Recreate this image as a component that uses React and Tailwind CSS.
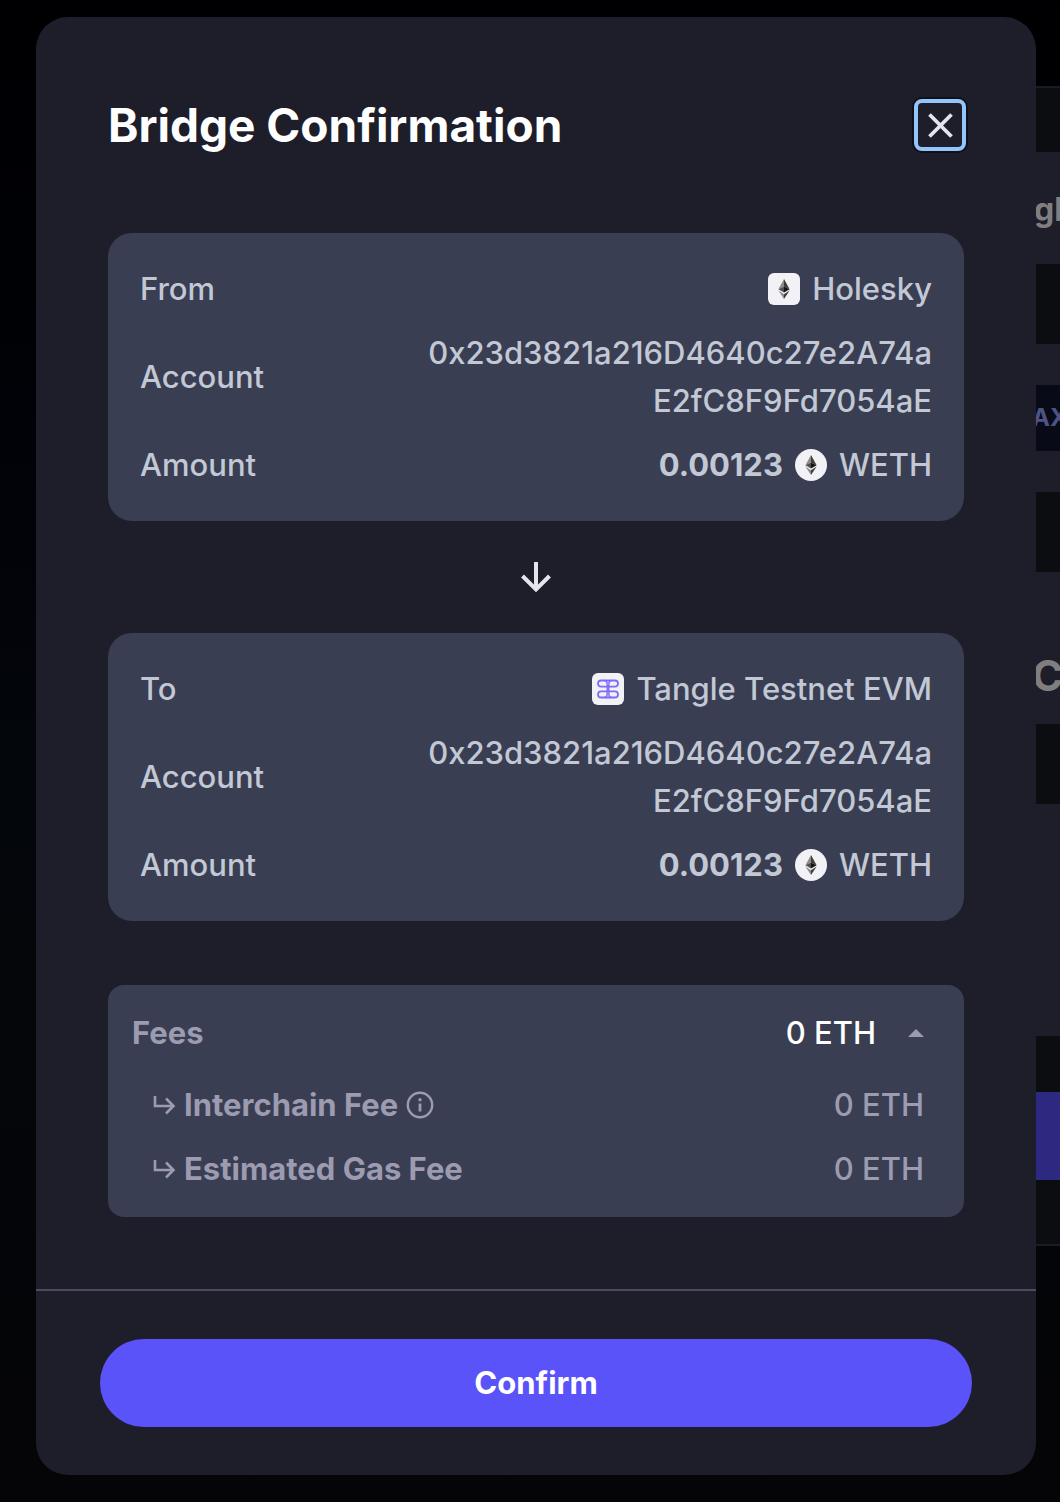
function EthMark() {
  return (
    <svg viewBox="0 0 32 32" className="size-8" aria-hidden="true">
      <path d="M16 6 10.4 16.2 16 13.6z" fill="#8a8a8a" />
      <path d="M16 6v7.6l5.6 2.6z" fill="#3c3c3b" />
      <path d="M10.4 16.2 16 19.6v-6z" fill="#505050" />
      <path d="M21.6 16.2 16 19.6v-6z" fill="#141414" />
      <path d="M10.4 17.6 16 26v-4.8z" fill="#8c8c8c" />
      <path d="M21.6 17.6 16 26v-4.8z" fill="#3c3c3b" />
    </svg>
  );
}

function TangleMark() {
  return (
    <svg viewBox="0 0 32 32" className="size-8" fill="none" stroke="#7c6cf8" strokeWidth="1.8" aria-hidden="true">
      <rect x="6" y="7.500" width="20" height="6.200" rx="3.100" />
      <rect x="6" y="18.300" width="20" height="6.200" rx="3.100" />
      <path d="M12 7.500c3.200 0 3.200 2.500 3.200 5.500v6c0 3 0 5.500-3.200 5.500M20 7.500c-3.200 0-3.200 2.500-3.200 5.500v6c0 3 0 5.500 3.200 5.500" strokeWidth="1.400" />
    </svg>
  );
}

function TransferCard({ label, chain, chainMark }) {
  return (
    <dl className="flex flex-col gap-4 rounded-3xl bg-[#3a3e53] p-8 text-[31px] leading-[48px] font-medium text-[#c2c8d4]">
      <div className="flex items-center justify-between">
        <dt>{label}</dt>
        <dd className="flex items-center gap-3">
          <span className="rounded-md bg-[#f1f1f6]">{chainMark}</span>
          {chain}
        </dd>
      </div>
      <div className="flex items-center justify-between">
        <dt>Account</dt>
        <dd className="max-w-[512px] text-right break-all">0x23d3821a216D4640c27e2A74aE2fC8F9Fd7054aE</dd>
      </div>
      <div className="flex items-center justify-between">
        <dt>Amount</dt>
        <dd className="flex items-center gap-3">
          <span className="font-bold">0.00123</span>
          <span className="rounded-full bg-[#f1f1f6]"><EthMark /></span>
          WETH
        </dd>
      </div>
    </dl>
  );
}

function FeeRow({ name, info }) {
  return (
    <div className="flex items-center justify-between pr-4 pl-5">
      <div className="flex items-center">
        <svg viewBox="0 0 24 24" className="mr-2 size-6" fill="none" stroke="currentColor" strokeWidth="2.6" aria-hidden="true">
          <path d="M3 3v10h19M14 5.500l7.500 7.500L14 20.500" />
        </svg>
        <span className="font-bold">{name}</span>
        {info && (
          <button type="button" aria-label="About this fee" className="ml-2">
            <svg viewBox="0 0 28 28" className="size-7" fill="none" stroke="currentColor" strokeWidth="2.400" aria-hidden="true">
              <circle cx="14" cy="14" r="12.200" />
              <path d="M14 12.500v8" strokeWidth="2.800" />
              <circle cx="14" cy="8.700" r="1.700" fill="currentColor" stroke="none" />
            </svg>
          </button>
        )}
      </div>
      <span>0 ETH</span>
    </div>
  );
}

function Backdrop() {
  return (
    <div aria-hidden="true" className="col-start-1 row-start-1 flex justify-end overflow-hidden bg-[#020206] bg-linear-to-b from-[#000003] via-[#03060b] to-[#050507] pt-[86px]">
      <div className="flex h-[1160px] w-10 flex-col overflow-hidden border-y-2 border-[#1b1b26] bg-[#0b0d11] font-bold whitespace-nowrap">
        <div className="mt-16 flex h-[884px] flex-col bg-[#1e1d2a] pl-3">
          <div className="h-28 pt-9 pl-0.5 text-[32px] leading-[44px] text-[#807f80]">gl</div>
          <div className="h-20 bg-[#0b0d11]" />
          <div className="mt-[41px] h-[66px] bg-[#080a17] text-[24px] leading-[66px] text-[#4e5383]">AX</div>
          <div className="mt-[41px] h-20 bg-[#0b0d11]" />
          <div className="h-[152px] pt-20 text-[42px] leading-[48px] text-[#807f80]">C</div>
          <div className="h-20 bg-[#0b0d11]" />
        </div>
        <div className="mt-14 h-[88px] bg-[#2d2880]" />
      </div>
    </div>
  );
}

export default function App() {
  return (
    <div className="grid min-h-screen bg-black font-['Inter',sans-serif]">
      <Backdrop />
      <main role="dialog" aria-labelledby="title" className="relative col-start-1 row-start-1 mt-[17px] mr-6 mb-[27px] ml-9 self-start rounded-[32px] bg-[#1e1d2a]">
        <div className="p-[72px]">
          <header className="mb-[72px] flex h-[72px] items-center justify-between">
            <h1 id="title" className="text-[46px] leading-[72px] font-bold text-white">Bridge Confirmation</h1>
            <button type="button" aria-label="Close" className="-mr-0.5 flex size-[52px] items-center justify-center rounded-lg border-4 border-[#93c5fd] text-[#e4e5ec] shadow-[0_0_0_2px_#101016]">
              <svg viewBox="0 0 28 28" className="size-7" fill="none" stroke="currentColor" strokeWidth="3.800" aria-hidden="true">
                <path d="m3.500 3.500 22 22M25.500 3.500l-22 22" />
              </svg>
            </button>
          </header>

          <TransferCard label="From" chain="Holesky" chainMark={<EthMark />} />
          <div className="flex justify-center py-10 text-[#e4e5ec]">
            <svg viewBox="0 0 32 32" className="size-8" fill="none" stroke="currentColor" strokeWidth="4" aria-hidden="true">
              <path d="M16 1v27M2.500 15 16 28.500l13.500-13.500" />
            </svg>
          </div>
          <TransferCard label="To" chain="Tangle Testnet EVM" chainMark={<TangleMark />} />

          <section className="mt-16 flex flex-col gap-4 rounded-2xl bg-[#3a3e53] p-6 text-[31px] leading-[48px] font-medium text-[#9c9bb0]">
            <button type="button" aria-expanded="true" className="mb-2 flex items-center justify-between pr-4">
              <span className="font-bold">Fees</span>
              <span className="flex items-center gap-8 text-white">
                0 ETH
                <svg viewBox="0 0 16 8" className="h-2 w-4 text-[#9c9bb0]" aria-hidden="true">
                  <path d="M0 8 8 0l8 8z" fill="currentColor" />
                </svg>
              </span>
            </button>
            <FeeRow name="Interchain Fee" info />
            <FeeRow name="Estimated Gas Fee" />
          </section>
        </div>

        <footer className="border-t-2 border-[#4c4c5c] px-16 py-12">
          <button type="button" className="h-[88px] w-full rounded-full bg-[#5953f9] text-[31px] font-bold text-white">Confirm</button>
        </footer>
      </main>
    </div>
  );
}
